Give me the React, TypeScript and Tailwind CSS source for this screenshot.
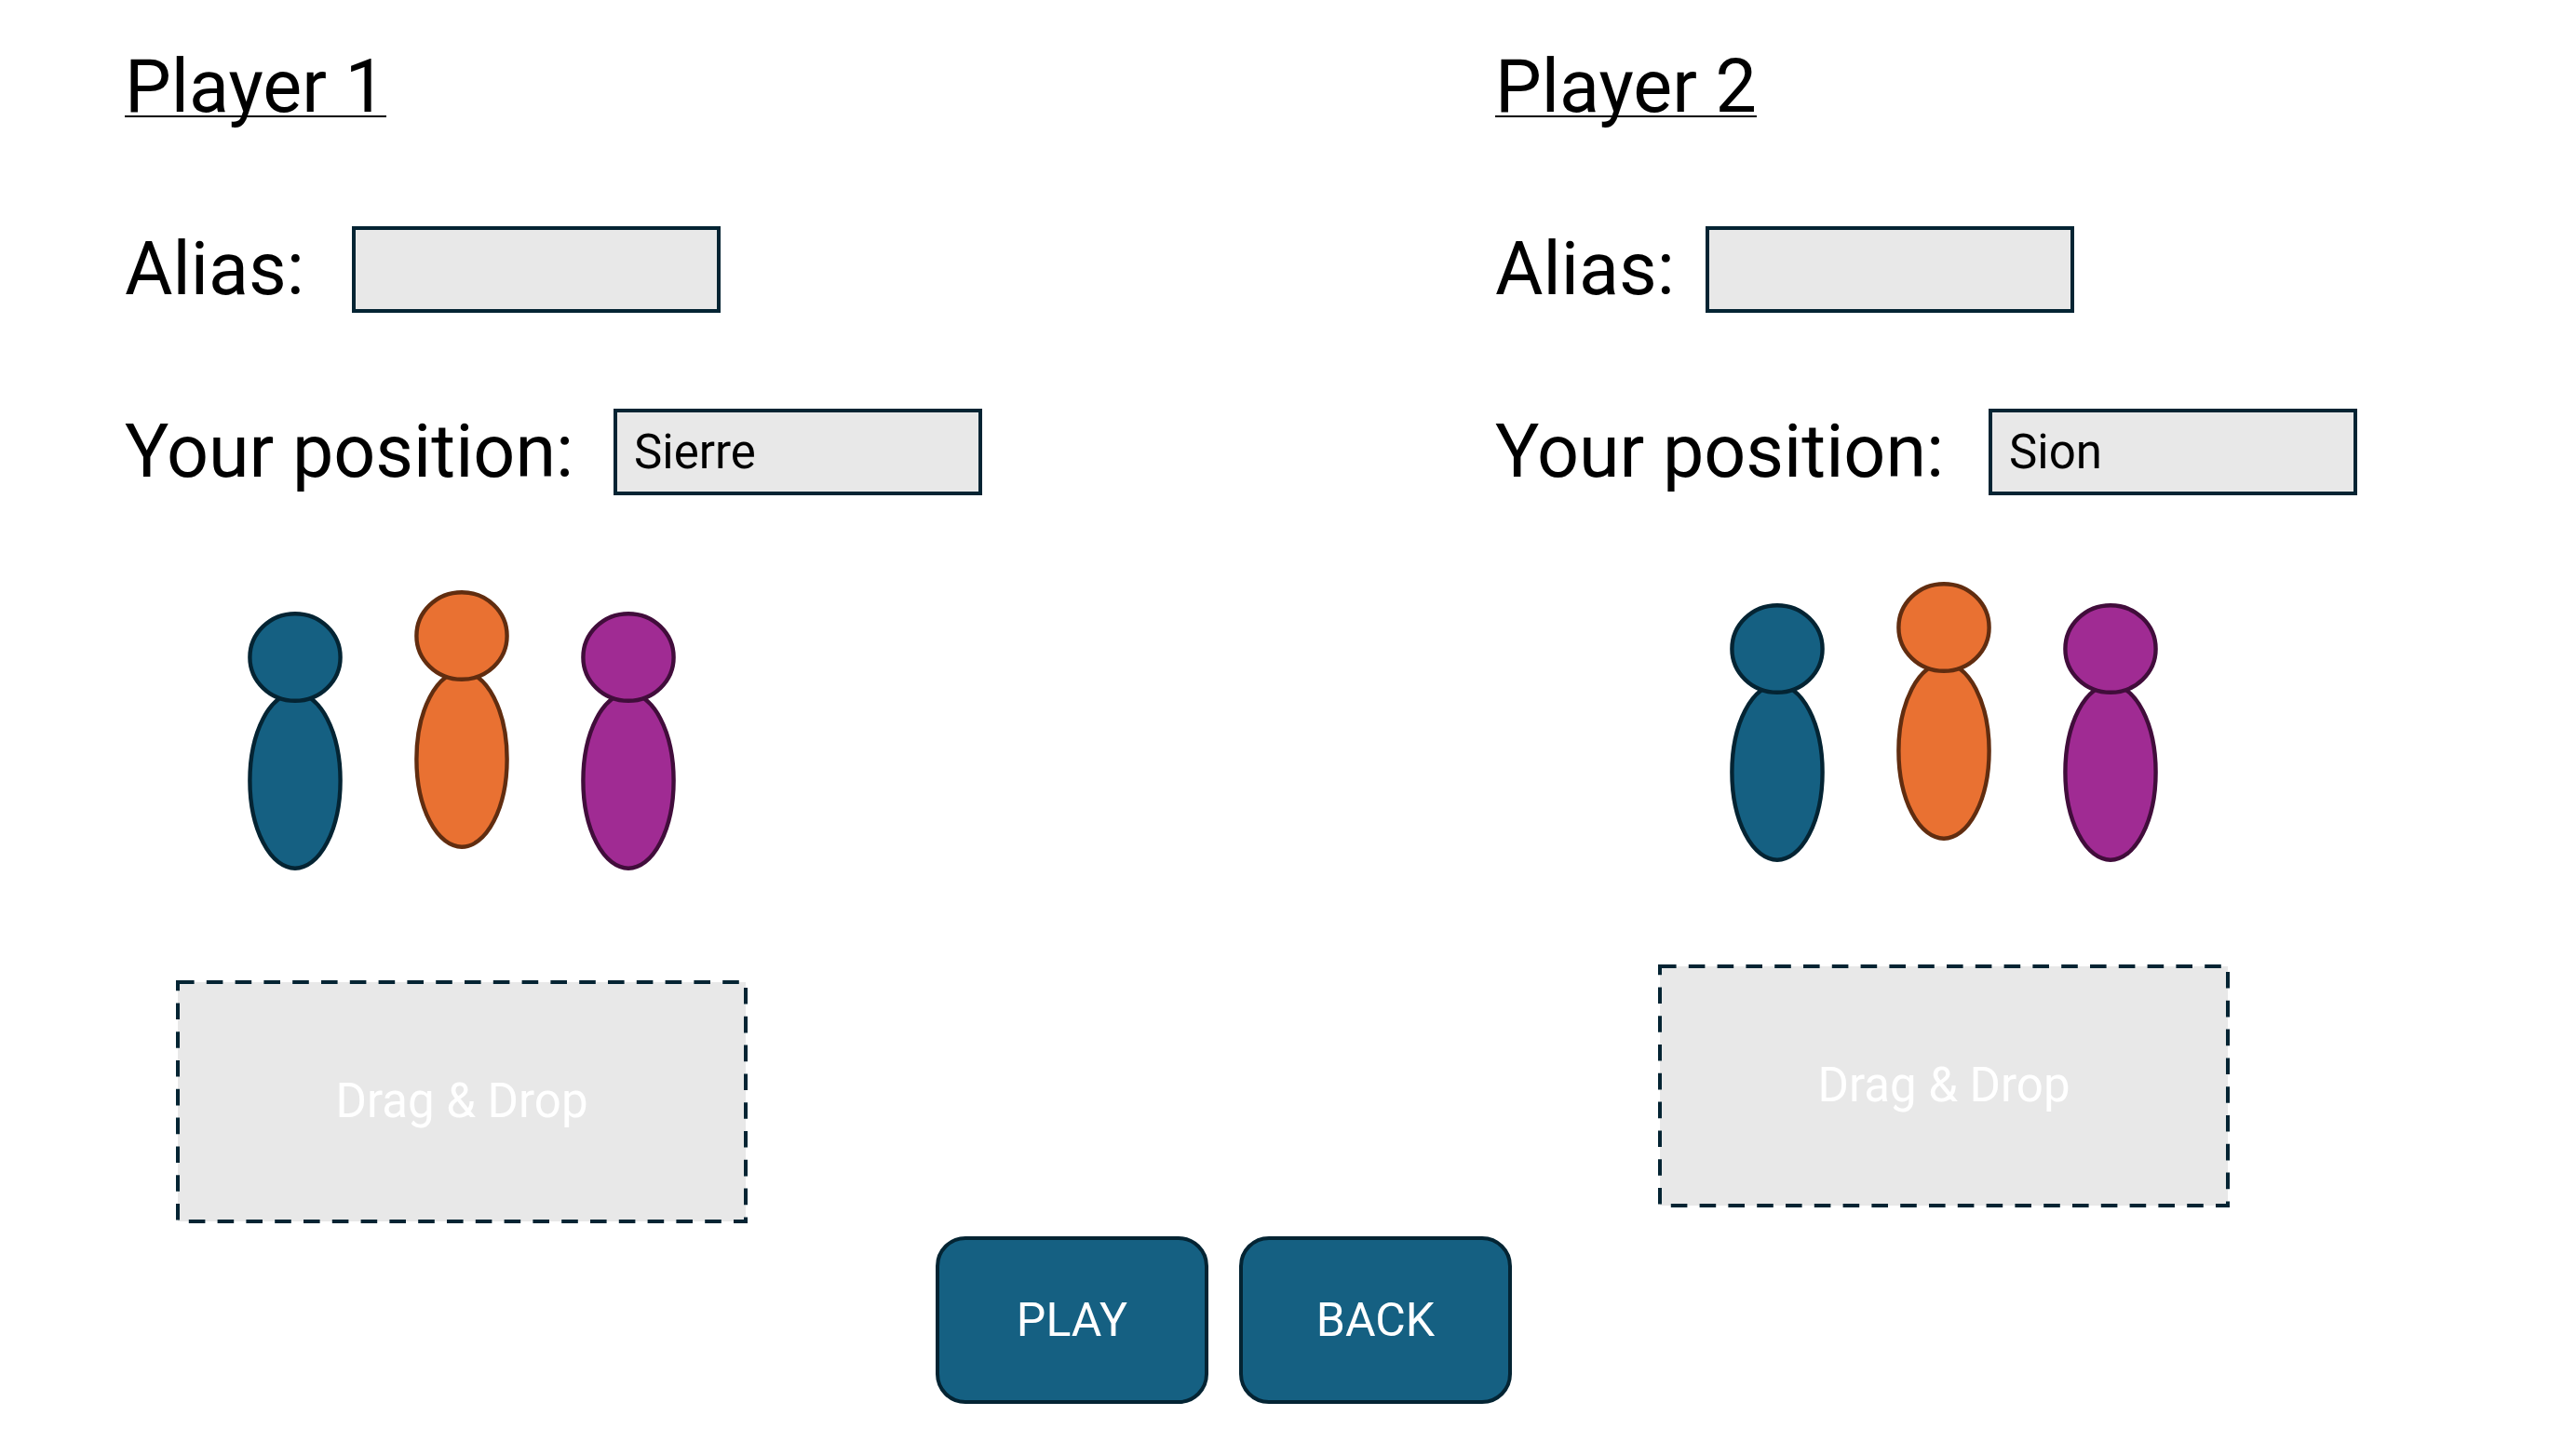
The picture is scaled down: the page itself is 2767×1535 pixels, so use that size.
type PawnColor = { name: string; fill: string; line: string };

type Player = {
  id: string;
  title: string;
  position: string;
  aliasLabel: string;
  positionLabel: string;
  board: string;
  dropGap: string;
};

const pawns: PawnColor[] = [
  { name: "Blue", fill: "fill-[#156082]", line: "stroke-[#042433]" },
  { name: "Orange", fill: "fill-[#e97132]", line: "stroke-[#612d10]" },
  { name: "Purple", fill: "fill-[#a02b93]", line: "stroke-[#410d3b]" },
];

const players: Player[] = [
  {
    id: "p1",
    title: "Player 1",
    position: "Sierre",
    aliasLabel: "w-[244px]",
    positionLabel: "w-[525px]",
    board: "mt-[102px] ml-[55px]",
    dropGap: "mt-[118px]",
  },
  {
    id: "p2",
    title: "Player 2",
    position: "Sion",
    aliasLabel: "w-[226px]",
    positionLabel: "w-[530px]",
    board: "mt-[93px] ml-[175px]",
    dropGap: "mt-[110px]",
  },
];

function Field({ id, label, labelWidth, value }: { id: string; label: string; labelWidth: string; value: string }) {
  return (
    <div className="mt-[103px] flex items-center">
      <label htmlFor={id} className={`shrink-0 whitespace-nowrap text-[79px] leading-[93px] ${labelWidth}`}>
        {label}
      </label>
      <input
        id={id}
        type="text"
        defaultValue={value}
        className="h-[93px] w-[396px] min-w-0 border-4 border-[#042433] bg-[#e8e8e8] px-[18px] text-[51px] outline-none"
      />
    </div>
  );
}

function Pawn({ color, raised }: { color: PawnColor; raised: boolean }) {
  return (
    <svg
      viewBox="0 0 102 278"
      role="img"
      aria-label={`${color.name} pawn`}
      className={`h-[278px] w-[102px] ${raised ? "self-start" : "self-end"} ${color.fill} ${color.line}`}
      strokeWidth="4.4"
    >
      <ellipse cx="51" cy="181.5" rx="48.6" ry="94.2" />
      <ellipse cx="51" cy="49" rx="48.6" ry="46.8" />
    </svg>
  );
}

function DropZone({ gap }: { gap: string }) {
  return (
    <div className={`relative flex h-[261px] w-full items-center justify-center text-[51px] text-white ${gap}`}>
      <svg viewBox="0 0 614 261" preserveAspectRatio="none" aria-hidden="true" className="absolute inset-0 size-full">
        <rect
          x="2"
          y="2"
          width="610"
          height="257"
          className="fill-[#e8e8e8] stroke-[#042433]"
          strokeWidth="4"
          strokeDasharray="17.6 13.2"
        />
      </svg>
      <span className="relative">Drag &amp; Drop</span>
    </div>
  );
}

function PlayerPanel({ player }: { player: Player }) {
  return (
    <section className="flex flex-col items-start">
      <h2 className="text-[79px] leading-[94px] underline decoration-2 underline-offset-4 [text-decoration-skip-ink:none]">
        {player.title}
      </h2>
      <Field id={`${player.id}-alias`} label="Alias:" labelWidth={player.aliasLabel} value="" />
      <Field
        id={`${player.id}-position`}
        label="Your position:"
        labelWidth={player.positionLabel}
        value={player.position}
      />
      <div className={`flex w-[614px] flex-col items-center ${player.board}`}>
        <div className="flex h-[301px] gap-[77px]">
          {pawns.map((color, i) => (
            <Pawn key={color.name} color={color} raised={i === 1} />
          ))}
        </div>
        <DropZone gap={player.dropGap} />
      </div>
    </section>
  );
}

function ActionButton({ label }: { label: string }) {
  return (
    <button
      type="button"
      className="h-[180px] w-[293px] rounded-[32px] border-4 border-[#042433] bg-[#156082] text-[50px] text-white"
    >
      {label}
    </button>
  );
}

export default function App() {
  return (
    <main className="min-h-screen bg-white font-['Roboto',sans-serif] text-black">
      <div className="grid grid-cols-[1472fr_1161fr] pt-[46px] pl-[134px]">
        {players.map((player) => (
          <PlayerPanel key={player.id} player={player} />
        ))}
      </div>
      <div className="mt-[14px] flex justify-center gap-[33px] pr-[138px]">
        <ActionButton label="PLAY" />
        <ActionButton label="BACK" />
      </div>
    </main>
  );
}
